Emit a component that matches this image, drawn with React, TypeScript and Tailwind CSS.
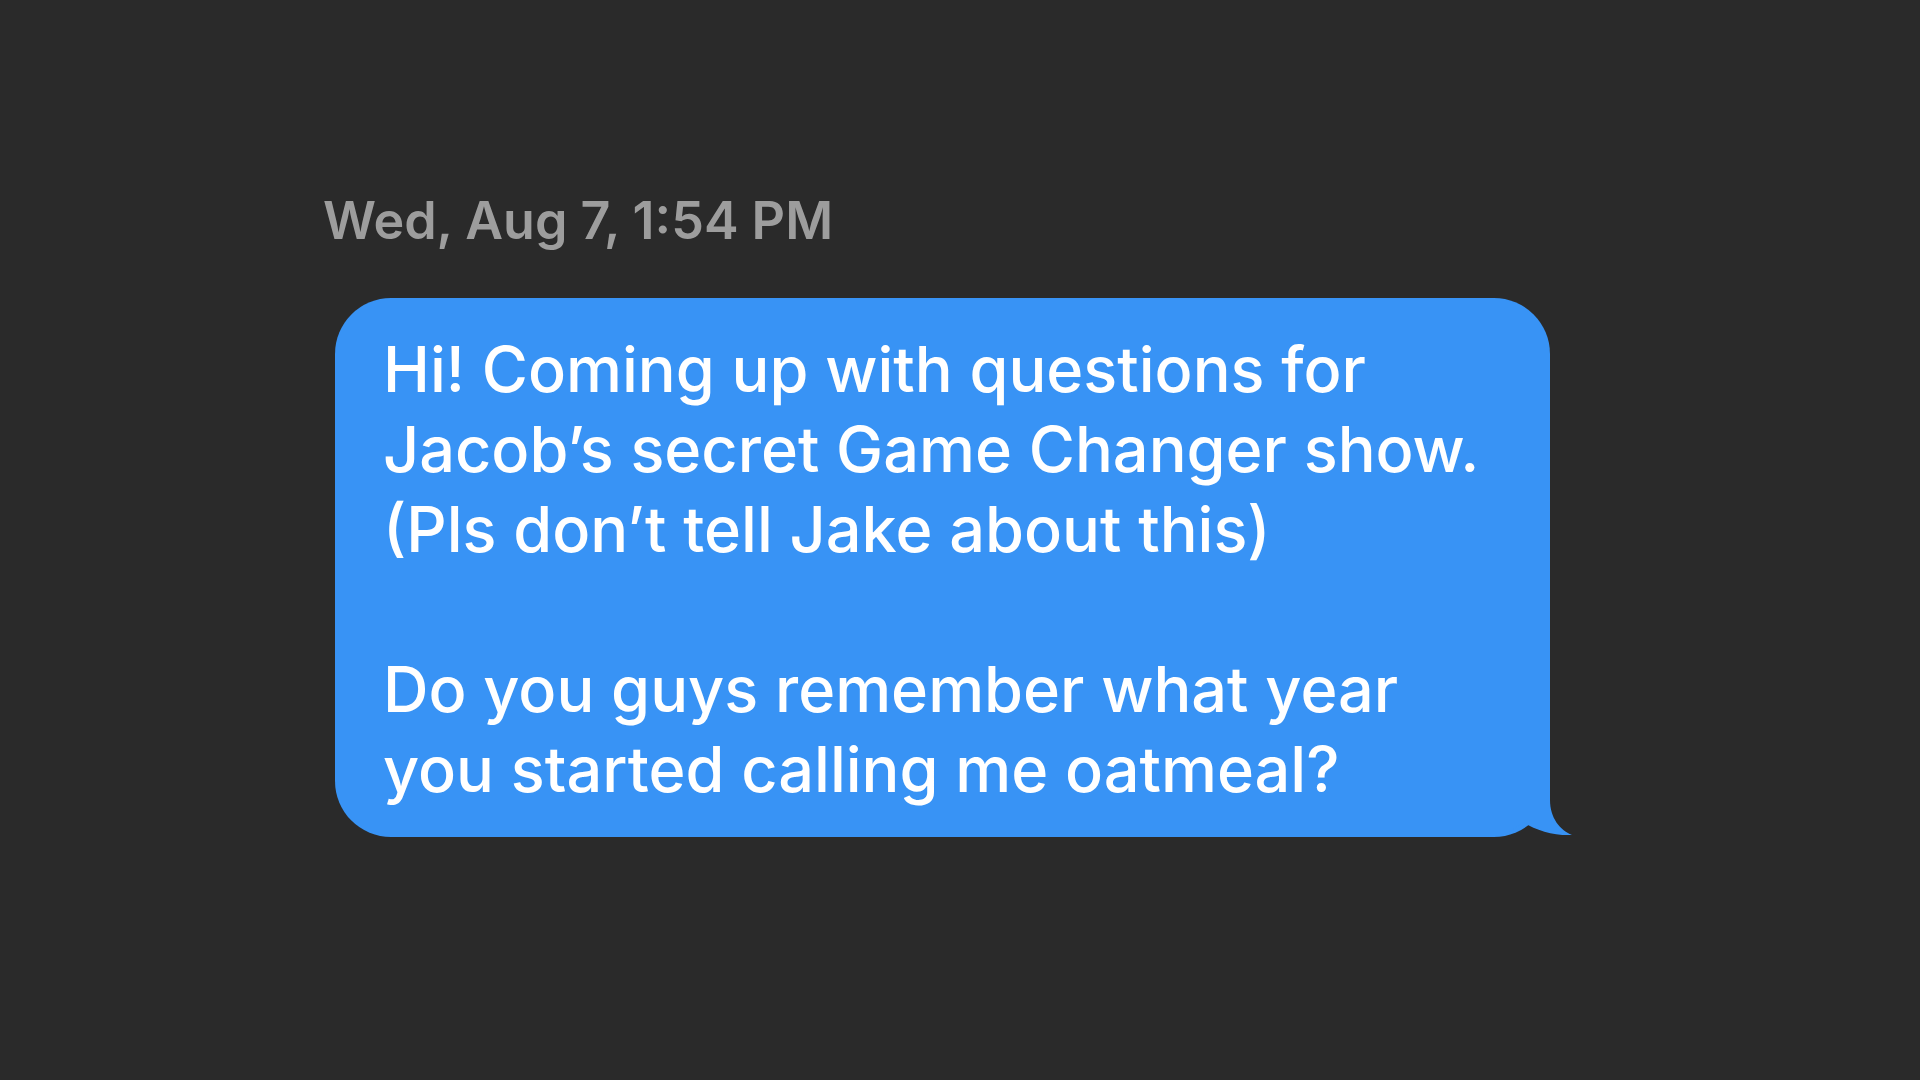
export default function App() {
  return (
    <div className="min-h-screen w-full bg-[#2a2a2a] font-['Inter',sans-serif] antialiased">
      <div className="flex flex-col items-start pt-[191px]">
        <div className="pl-[323px] text-[52px] leading-[60px] font-semibold text-[#9d9d9d]">
          Wed, Aug 7, 1:54 PM
        </div>

        {/* message bubble */}
        <div className="relative ml-[335px] mt-[47px] w-[1215px] rounded-[56px] bg-[#3893f5] pl-[48px] pr-[20px] pt-[31px] pb-[28px]">
          <p className="text-[63px] leading-[80px] font-medium text-white">
            Hi! Coming up with questions for
            <br />
            Jacob’s secret Game Changer show.
            <br />
            (Pls don’t tell Jake about this)
            <br />
            <br />
            Do you guys remember what year
            <br />
            you started calling me oatmeal?
          </p>

          {/* tail */}
          <svg
            className="absolute right-[-30px] bottom-0"
            width="100"
            height="57"
            viewBox="0 0 100 57"
          >
            <path
              d="M0 0 H70 V20 C70 38 80 50 92 55 C75 56 55 50 43 42 C35 50 22 56 8 57 H0 Z"
              fill="#3893f5"
            />
          </svg>
        </div>
      </div>
    </div>
  )
}
